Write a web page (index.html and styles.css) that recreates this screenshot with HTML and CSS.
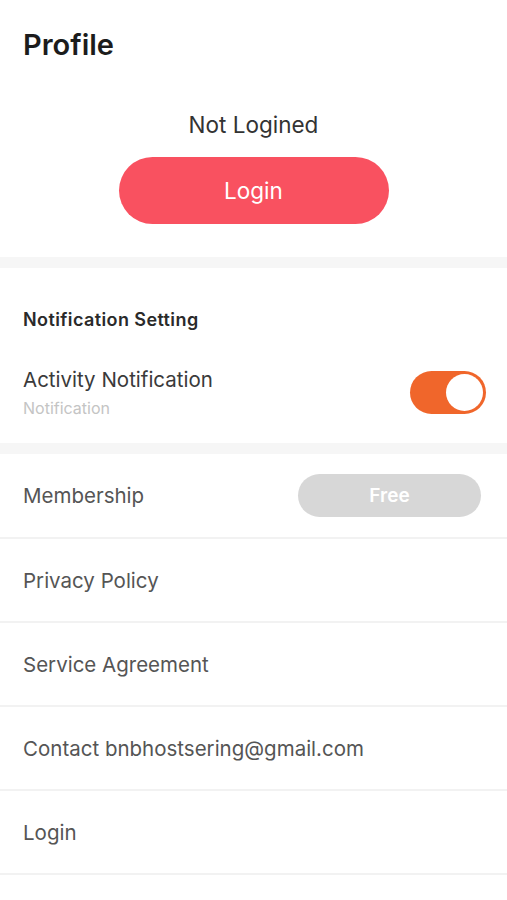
FILE: index.html
```html
<!DOCTYPE html>
<html lang="en">
<head>
    <meta charset="UTF-8">
    <meta name="viewport" content="width=device-width, initial-scale=1.0">
    <link rel="stylesheet" href="styles.css">
    <title>Profile</title>
</head>
<body>
    <div class="page">
        <h1 class="page-title">Profile</h1>

        <div class="account">
            <div class="account-status">Not Logined</div>
            <button type="button" class="login-button">Login</button>
        </div>

        <div class="band"></div>

        <div class="notify">
            <div class="section-title">Notification Setting</div>
            <div class="notify-row">
                <div>
                    <div class="notify-name">Activity Notification</div>
                    <div class="notify-sub">Notification</div>
                </div>
                <div class="toggle on"><span class="knob"></span></div>
            </div>
        </div>

        <div class="band"></div>

        <ul class="menu">
            <li class="menu-item">
                <span>Membership</span>
                <span class="plan">Free</span>
            </li>
            <li class="menu-item">Privacy Policy</li>
            <li class="menu-item">Service Agreement</li>
            <li class="menu-item">Contact bnbhostsering@gmail.com</li>
            <li class="menu-item">Login</li>
        </ul>
    </div>
</body>
</html>
```

FILE: styles.css
```css
body {
    margin: 0;
    background: #fff;
    font-family: Inter, "Noto Sans", sans-serif;
    color: #555;
}

.page {
    width: 507px;
}

.page-title {
    margin: 0;
    padding: 26px 23px 0;
    font-size: 29px;
    font-weight: 600;
    line-height: 38px;
    color: #1c1c1c;
}

.account {
    display: flex;
    flex-direction: column;
    align-items: center;
    padding-top: 46px;
    padding-bottom: 33px;
}

.account-status {
    font-size: 22.5px;
    line-height: 30px;
    color: #333;
    margin-bottom: 17px;
}

.login-button {
    width: 270px;
    height: 67px;
    border: none;
    border-radius: 34px;
    background-color: #f95160;
    color: #fff;
    font-family: inherit;
    font-size: 22.5px;
}

.band {
    height: 11px;
    background: #f6f6f6;
}

.notify {
    padding: 40px 21px 0 23px;
    height: 175px;
    box-sizing: border-box;
}

.section-title {
    font-size: 18px;
    font-weight: 600;
    letter-spacing: 0.4px;
    line-height: 24px;
    color: #2a2a2a;
}

.notify-row {
    display: flex;
    justify-content: space-between;
    align-items: center;
    margin-top: 34px;
}

.notify-name {
    font-size: 20.5px;
    line-height: 28px;
    color: #3a3a3a;
}

.notify-sub {
    font-size: 16px;
    line-height: 22px;
    margin-top: 3px;
    color: #c4c4c4;
}

.toggle {
    width: 76px;
    height: 43px;
    border-radius: 22px;
    background: #ddd;
    box-sizing: border-box;
    padding: 3px;
    display: flex;
}

.toggle.on {
    background: #f0662b;
    justify-content: flex-end;
}

.knob {
    width: 37px;
    height: 37px;
    border-radius: 50%;
    background: #fff;
}

.menu {
    list-style: none;
    margin: 0;
    padding: 0;
}

.menu-item {
    display: flex;
    justify-content: space-between;
    align-items: center;
    height: 82px;
    padding: 0 26px 0 23px;
    border-bottom: 2px solid #f2f2f2;
    font-size: 20.5px;
    color: #555;
}

.menu-item:first-child {
    height: 83px;
}

.plan {
    width: 183px;
    height: 43px;
    border-radius: 22px;
    background: #d7d7d7;
    color: #fff;
    font-size: 19px;
    font-weight: 600;
    display: flex;
    align-items: center;
    justify-content: center;
}
```
